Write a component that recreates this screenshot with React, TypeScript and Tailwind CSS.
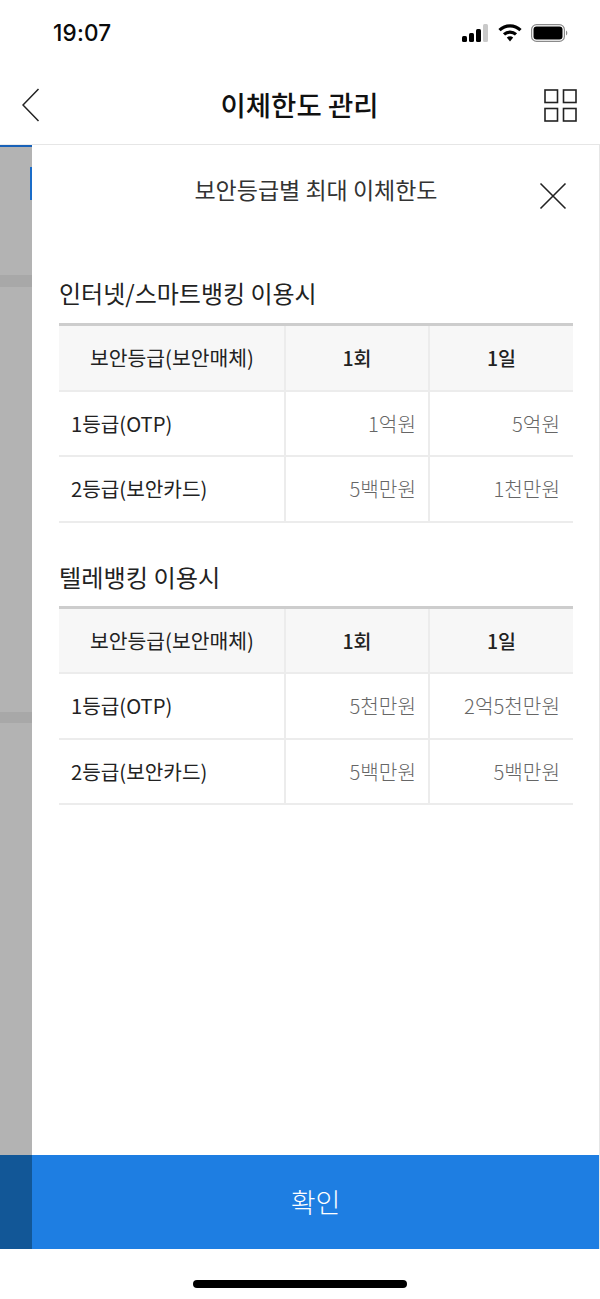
const font = "font-['Noto_Sans_CJK_KR','Noto_Sans',sans-serif]";

type Row = { label: string; once: string; day: string };

function LimitTable({ rows }: { rows: Row[] }) {
  return (
    <table className="w-[514px] table-fixed border-collapse border-t-[3px] border-[#cdcdcd]">
      <colgroup>
        <col className="w-[226px]" />
        <col className="w-[144px]" />
        <col className="w-[144px]" />
      </colgroup>
      <thead>
        <tr className="h-[66px] bg-[#f7f7f7] text-[#222222]">
          <th className="border-r-2 border-b-2 border-[#ececec] pl-[1px] text-[20.4px] font-normal">보안등급(보안매체)</th>
          <th className="border-r-2 border-b-2 border-[#ececec] text-[19.5px] font-medium">1회</th>
          <th className="border-b-2 border-[#ececec] text-[19.5px] font-medium">1일</th>
        </tr>
      </thead>
      <tbody>
        {rows.map((r) => (
          <tr key={r.label} className="h-[65.5px] text-[20.2px]">
            <td className="border-r-2 border-b-2 border-[#ececec] pt-[1px] pl-[12px] text-[#222222]">{r.label}</td>
            <td className="border-r-2 border-b-2 border-[#ececec] pt-[1px] pr-[12px] text-right font-light text-[#666666]">{r.once}</td>
            <td className="border-b-2 border-[#ececec] pt-[1px] pr-[13px] text-right font-light text-[#666666]">{r.day}</td>
          </tr>
        ))}
      </tbody>
    </table>
  );
}

function StatusIcons() {
  return (
    <div className="flex items-center">
      <svg width="27" height="18" viewBox="0 0 27 18">
        <rect x="1" y="12" width="5" height="6" rx="1.5" fill="#000" />
        <rect x="8" y="9" width="5" height="9" rx="1.5" fill="#000" />
        <rect x="15" y="5" width="5" height="13" rx="1.5" fill="#000" />
        <rect x="22" y="0" width="5" height="18" rx="1.5" fill="#c9c9c9" />
      </svg>
      <svg width="24" height="18" viewBox="0 0 24 18" className="ml-[10px]">
        <path d="M1.5 6.2 A15 15 0 0 1 22.5 6.2" fill="none" stroke="#000" strokeWidth="3.2" />
        <path d="M6 10.4 A9 9 0 0 1 18 10.4" fill="none" stroke="#000" strokeWidth="3.2" />
        <path d="M8.8 13.6 L12 17.6 L15.2 13.6 A5 5 0 0 0 8.8 13.6 Z" fill="#000" />
      </svg>
      <svg width="38" height="18" viewBox="0 0 38 18" className="ml-[9px]">
        <rect x="0.6" y="0.6" width="32.8" height="16.8" rx="5" fill="none" stroke="#8a8a8a" strokeWidth="1.2" />
        <rect x="2.5" y="2.5" width="29" height="13" rx="3" fill="#000" />
        <path d="M35 6.5 A3 3 0 0 1 35 11.5 Z" fill="#8a8a8a" />
      </svg>
    </div>
  );
}

export default function App() {
  return (
    <div className={`${font} flex h-[1299px] w-[600px] flex-col overflow-hidden bg-white`}>
      <div className="flex h-[66px] shrink-0 items-center justify-between pr-[31px] pl-[53px]">
        <span className="font-['Inter','Liberation_Sans',sans-serif] text-[22.5px] font-medium tracking-[0.2px] text-[#0a0a0a]">19:07</span>
        <StatusIcons />
      </div>

      <div className="flex h-[78px] shrink-0 items-center pr-[23px] pl-[22px]">
        <div className="flex flex-1 justify-start">
          <svg width="18" height="34" viewBox="0 0 18 34">
            <path d="M16.5 1 L1 17 L16.5 33" fill="none" stroke="#222" strokeWidth="1.5" />
          </svg>
        </div>
        <h1 className="text-[27.5px] leading-none font-medium text-[#111111]">이체한도 관리</h1>
        <div className="flex flex-1 justify-end">
          <svg width="33" height="33" viewBox="0 0 33 33">
            <g fill="none" stroke="#222" strokeWidth="1.6">
              <rect x="1" y="1" width="12.5" height="12.5" />
              <rect x="19.5" y="1" width="12.5" height="12.5" />
              <rect x="1" y="19.5" width="12.5" height="12.5" />
              <rect x="19.5" y="19.5" width="12.5" height="12.5" />
            </g>
          </svg>
        </div>
      </div>

      <div className="flex min-h-0 flex-1">
        <div className="flex w-[32px] shrink-0 flex-col border-t border-[#ededed] bg-[#b3b3b3]">
          <div className="h-[2px] bg-[#1861b8]" />
          <div className="mt-[20px] ml-auto h-[33px] w-[2px] bg-[#1a6cc8]" />
          <div className="mt-[75px] h-[12px] bg-[#a8a8a8]" />
          <div className="mt-[425px] h-[11px] bg-[#a8a8a8]" />
          <div className="mt-auto h-[94px] bg-[#125797]" />
        </div>

        <div className="flex min-w-0 flex-1 flex-col border-t border-r border-[#e6e6e6] bg-white">
          <div className="relative flex-1">
            <h2 className="pt-[30px] pl-[1px] text-center text-[23px] leading-[28px] text-[#333333]">보안등급별 최대 이체한도</h2>
            <svg width="28" height="28" viewBox="0 0 28 28" className="absolute top-[37px] right-[32px]">
              <path d="M1.5 1.5 L26.5 26.5 M26.5 1.5 L1.5 26.5" fill="none" stroke="#222" strokeWidth="1.6" />
            </svg>

            <div className="pl-[27px]">
              <h3 className="mt-[73px] mb-[13px] text-[24px] leading-[34px] text-[#222222]">인터넷/스마트뱅킹 이용시</h3>
              <LimitTable
                rows={[
                  { label: "1등급(OTP)", once: "1억원", day: "5억원" },
                  { label: "2등급(보안카드)", once: "5백만원", day: "1천만원" },
                ]}
              />
              <h3 className="mt-[37px] mb-[12px] text-[24.2px] leading-[34px] text-[#222222]">텔레뱅킹 이용시</h3>
              <LimitTable
                rows={[
                  { label: "1등급(OTP)", once: "5천만원", day: "2억5천만원" },
                  { label: "2등급(보안카드)", once: "5백만원", day: "5백만원" },
                ]}
              />
            </div>
          </div>
          <button className="h-[94px] w-full shrink-0 bg-[#1e7ee2] text-[27px] font-light text-white">확인</button>
        </div>
      </div>

      <div className="flex h-[50px] shrink-0 justify-center pt-[31px]">
        <div className="h-[8px] w-[214px] rounded-full bg-black" />
      </div>
    </div>
  );
}
